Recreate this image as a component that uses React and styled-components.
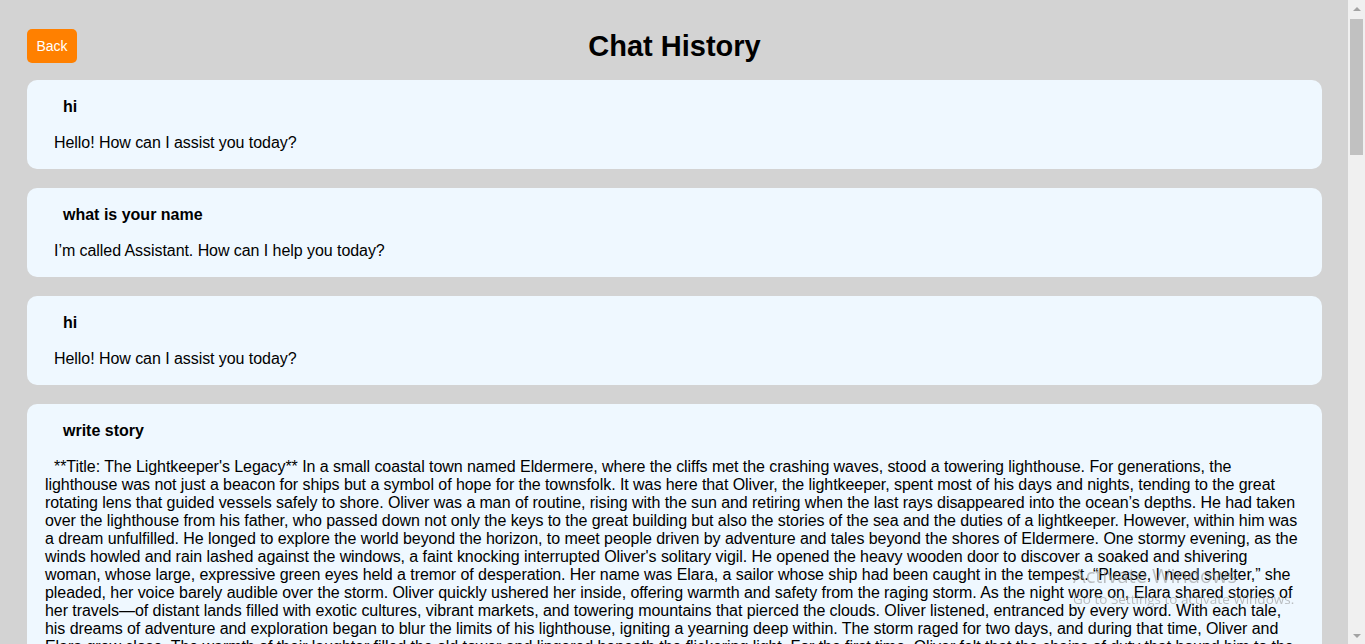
import React from 'react';
import styled, {createGlobalStyle} from 'styled-components';

const story = `**Title: The Lightkeeper's Legacy** In a small coastal town named Eldermere, where the cliffs met the crashing waves, stood a towering lighthouse. For generations, the lighthouse was not just a beacon for ships but a symbol of hope for the townsfolk. It was here that Oliver, the lightkeeper, spent most of his days and nights, tending to the great rotating lens that guided vessels safely to shore. Oliver was a man of routine, rising with the sun and retiring when the last rays disappeared into the ocean’s depths. He had taken over the lighthouse from his father, who passed down not only the keys to the great building but also the stories of the sea and the duties of a lightkeeper. However, within him was a dream unfulfilled. He longed to explore the world beyond the horizon, to meet people driven by adventure and tales beyond the shores of Eldermere. One stormy evening, as the winds howled and rain lashed against the windows, a faint knocking interrupted Oliver's solitary vigil. He opened the heavy wooden door to discover a soaked and shivering woman, whose large, expressive green eyes held a tremor of desperation. Her name was Elara, a sailor whose ship had been caught in the tempest. “Please, I need shelter,” she pleaded, her voice barely audible over the storm. Oliver quickly ushered her inside, offering warmth and safety from the raging storm. As the night wore on, Elara shared stories of her travels—of distant lands filled with exotic cultures, vibrant markets, and towering mountains that pierced the clouds. Oliver listened, entranced by every word. With each tale, his dreams of adventure and exploration began to blur the limits of his lighthouse, igniting a yearning deep within. The storm raged for two days, and during that time, Oliver and Elara grew close. The warmth of their laughter filled the old tower and lingered beneath the flickering light. For the first time, Oliver felt that the chains of duty that bound him to the rock were loosening. When the storm finally passed, Elara’s ship was found battered but still seaworthy, resting on the rocks below the cliffs. She asked Oliver to join her crew, to see with his own eyes the lands she had described. Torn between his father’s legacy and his own longing, Oliver climbed to the top of the lighthouse one last time and watched the great lens turn slowly against the grey morning sky. He realized that the light did not belong to him alone; it belonged to the town, to every fisherman and every sailor who had ever found their way home through the dark. The next morning, he gathered the townsfolk and began to teach young Finn, the baker’s son, how to tend the lamp, polish the lens, and read the moods of the sea. Weeks passed, and Finn learned quickly, his eyes bright with the same wonder Oliver had once felt as a boy. When the day of departure came, the whole of Eldermere gathered at the harbor. Oliver pressed the old brass keys into Finn’s hands and told him the stories his father had told him, so that they would never be lost. Then he stepped aboard Elara’s ship, and as the sails filled with wind, he looked back at the lighthouse standing proud on the cliff. Its beam swept across the water, steady and true, and Oliver knew that no matter how far he traveled, the light would always guide him home. **The End**`;

const chats = [
  {q: 'hi', a: 'Hello! How can I assist you today?'},
  {q: 'what is your name', a: 'I’m called Assistant. How can I help you today?'},
  {q: 'hi', a: 'Hello! How can I assist you today?'},
  {q: 'write story', a: story},
  {q: 'thank you', a: 'You’re welcome! If you have any more questions or need another story, feel free to ask.'},
  {q: 'hello', a: 'Hi there! What can I do for you today?'},
  {q: 'what can you do', a: 'I can answer questions, write stories, help with coding, explain concepts, and much more. Just let me know what you need!'},
  {q: 'tell me a joke', a: 'Why don’t scientists trust atoms? Because they make up everything!'},
  {q: 'another one', a: 'Why did the scarecrow win an award? Because he was outstanding in his field!'},
  {q: 'hi', a: 'Hello! How can I assist you today?'},
  {q: 'what is react', a: 'React is a JavaScript library for building user interfaces. It lets you create reusable components and efficiently update the page when your data changes.'},
  {q: 'bye', a: 'Goodbye! Have a great day!'},
  {q: 'hi', a: 'Hello! How can I assist you today?'},
];

const App = () => {
  return (
    <Page>
      <GlobalStyle />
      <Header>
        <BackButton>Back</BackButton>
        <Title>Chat History</Title>
      </Header>
      <List>
        {chats.map((c, i) => (
          <Card key={i}>
            <Question>{c.q}</Question>
            <Answer>{c.a}</Answer>
          </Card>
        ))}
      </List>
      <Watermark>
        <span>Activate Windows</span>
        <small>Go to Settings to activate Windows.</small>
      </Watermark>
      <ScrollBar>
        <Arrow />
        <Thumb />
        <Arrow $down />
      </ScrollBar>
    </Page>
  );
};

const GlobalStyle = createGlobalStyle`
  html, body {
    margin: 0;
    background: #d3d3d3;
    font-family: "Liberation Sans", Arial, sans-serif;
    color: #000;
  }
`

const Page = styled.div`
  padding: 29px 43px 27px 27px;
`

const Header = styled.div`
  display: grid;
  grid-template-columns: 1fr auto 1fr;
  align-items: center;
  height: 34px;
  margin-bottom: 17px;
`

const BackButton = styled.button`
  justify-self: start;
  background-color: #ff8000;
  color: #fff;
  border: none;
  border-radius: 5px;
  font-family: "Liberation Sans", Arial, sans-serif;
  font-size: 14px;
  line-height: 16px;
  padding: 9px 9.5px;
  cursor: pointer;
`

const Title = styled.h1`
  margin: 0;
  font-size: 29px;
  line-height: 32px;
  font-weight: 700;
`

const List = styled.div`
  display: flex;
  flex-direction: column;
  gap: 19px;
`

const Card = styled.div`
  display: flex;
  flex-direction: column;
  gap: 18px;
  background-color: #eff8ff;
  border-radius: 10px;
  padding: 18px 18px 17px;
  font-size: 16px;
  line-height: 18px;
`

const Question = styled.div`
  font-weight: 700;
  padding-left: 18px;
`

const Answer = styled.div`
  text-indent: 9px;
  letter-spacing: -0.06px;
`

const Watermark = styled.div`
  position: fixed;
  left: 1073px;
  top: 563px;
  display: flex;
  flex-direction: column;
  font-family: "Open Sans", sans-serif;
  color: rgba(140, 140, 140, 0.55);
  pointer-events: none;
  span {
    font-size: 20px;
    line-height: 26px;
  }
  small {
    font-size: 13.5px;
    line-height: 20px;
  }
`

const ScrollBar = styled.div`
  position: fixed;
  top: 0;
  right: 0;
  width: 17px;
  height: 100vh;
  background: #f0f0f0;
  display: flex;
  flex-direction: column;
  align-items: center;
`

const Arrow = styled.div`
  width: 17px;
  height: 17px;
  flex: none;
  display: flex;
  align-items: center;
  justify-content: center;
  margin-top: ${p => p.$down ? 'auto' : '0'};
  &::before {
    content: '';
    width: 0;
    height: 0;
    border-left: 4px solid transparent;
    border-right: 4px solid transparent;
    ${p => p.$down ? 'border-top: 4px solid #a3a3a3;' : 'border-bottom: 4px solid #a3a3a3;'}
  }
`

const Thumb = styled.div`
  width: 13px;
  height: 136px;
  margin-top: 2px;
  background: #c1c1c1;
`

export default App;
